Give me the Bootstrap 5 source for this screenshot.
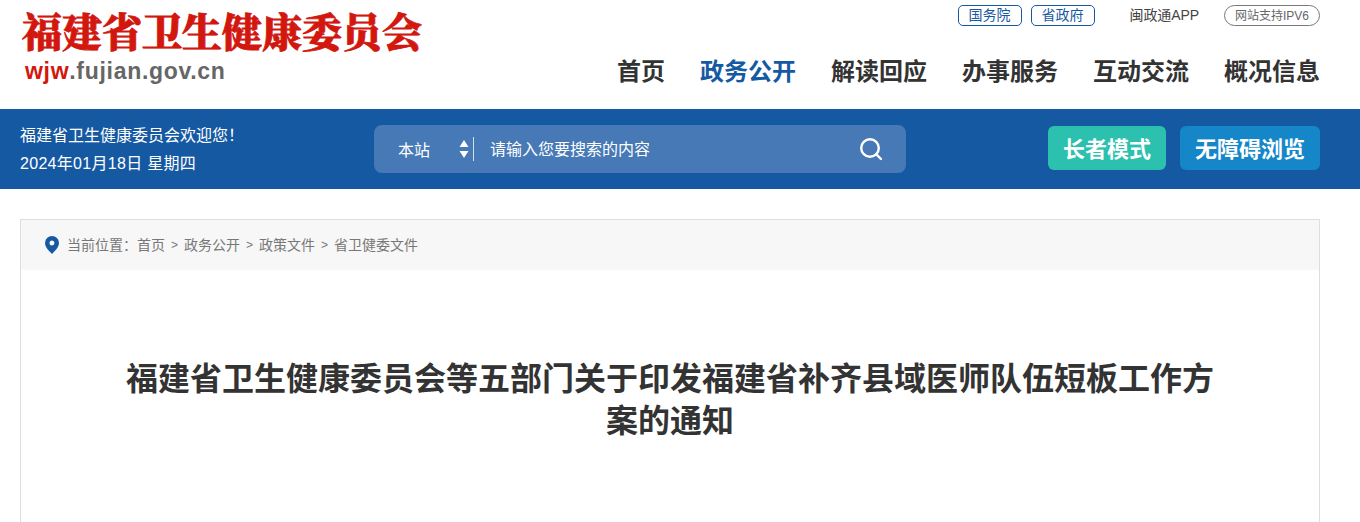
<!DOCTYPE html>
<html lang="zh"><head><meta charset="utf-8">
<link href="https://cdn.jsdelivr.net/npm/bootstrap@5.3.0/dist/css/bootstrap.min.css" rel="stylesheet">
<style>
html,body{height:522px;overflow:hidden}
body{font-family:"Liberation Sans","Noto Sans CJK SC",sans-serif;color:#333;background:#fff}
.top-wrap{height:109px;padding:0 40px 0 20px}
.logo-title{font-family:"Liberation Serif","Noto Serif CJK SC","Noto Sans CJK SC",serif;font-weight:900;font-size:40px;line-height:40px;color:#d2170f;margin:14px 0 0 2px;white-space:nowrap;-webkit-text-stroke:.8px #d2170f}
.logo-url{font-size:23px;line-height:26px;font-weight:700;color:#666;margin:4px 0 0 5px;letter-spacing:.7px}
.logo-url b{color:#d2170f}
.pill{font-size:14px;line-height:19px;height:21px;border:1px solid #1659a3;border-radius:5px;color:#1659a3;padding:0 10px;text-decoration:none}
.pill-grey{border-color:#777;color:#666;border-radius:11px;font-size:12px;padding:0 10px;line-height:20px}
.pill-gap{margin-left:9px}
.app-txt{font-size:14px;line-height:20px;color:#444;margin-left:35px;margin-top:-1px;letter-spacing:-.1px}
.ipv-gap{margin-left:25px}
.top-links{height:21px;margin-top:5px}
.main-nav{gap:35px;margin-top:30px}
.main-nav a{font-size:24px;line-height:32px;font-weight:700;color:#333;text-decoration:none}
.main-nav a.on{color:#1659a3}
.blue-band{background:#1659a3;height:80px;padding:0 40px 0 20px;color:#fff}
.welcome{width:354px;font-size:16px;line-height:28px;padding-top:1px}
.date-line{letter-spacing:.3px}
.search-box{width:532px;height:48px;background:#4679b5;border-radius:8px;color:#fff;font-size:16px}
.search-scope{width:100px;padding-left:24px;height:24px;border-right:1px solid rgba(255,255,255,.75)}
.scope-name{padding-top:3px}
.search-hint{padding-top:1px}
.search-ico{margin-right:23px}
.mode-row{gap:14px;margin-top:-2px}
.mode-btn{height:44px;font-size:22px;line-height:47px;font-weight:700;color:#fff;border-radius:6px;text-decoration:none;text-align:center}
.mode-a{background:#2cc0ae;width:118px}
.mode-b{background:#1586c8;width:140px}
.panel{margin:30px 40px 0 20px;border:1px solid #dedede;border-bottom:0;height:303px}
.crumb-bar{height:50px;background:#f7f7f7;padding-left:24px;font-size:14px;color:#777;gap:6px}
.crumb-pin{margin-right:2px}
.crumb-sep{font-size:12px}
.doc-title{font-size:32px;line-height:42px;font-weight:700;color:#333;text-align:center;margin:88px auto 0;width:1100px}
</style></head><body>
<header class="top-wrap d-flex justify-content-between">
 <div>
  <div class="logo-title">福建省卫生健康委员会</div>
  <div class="logo-url"><b>wjw</b>.fujian.gov.cn</div>
 </div>
 <div class="d-flex flex-column align-items-end">
  <div class="top-links d-flex align-items-center">
   <a class="pill" href="#">国务院</a><a class="pill pill-gap" href="#">省政府</a>
   <span class="app-txt">闽政通APP</span>
   <a class="pill pill-grey ipv-gap" href="#">网站支持IPV6</a>
  </div>
  <nav class="main-nav d-flex">
   <a href="#">首页</a><a class="on" href="#">政务公开</a><a href="#">解读回应</a><a href="#">办事服务</a><a href="#">互动交流</a><a href="#">概况信息</a>
  </nav>
 </div>
</header>
<section class="blue-band d-flex align-items-center">
 <div class="welcome"><div>福建省卫生健康委员会欢迎您！</div><div class="date-line">2024年01月18日 星期四</div></div>
 <div class="search-box d-flex align-items-center">
  <div class="search-scope d-flex align-items-center justify-content-between pe-1"><span class="scope-name">本站</span>
   <svg width="10" height="20" viewBox="0 0 10 20"><path d="M5 1 9.500 8H.5zM5 19 .5 12h9z" fill="#fff"/></svg></div>
  <div class="search-hint ps-3 flex-grow-1">请输入您要搜索的内容</div>
  <svg class="search-ico" width="24" height="24" viewBox="0 0 24 24" fill="none" stroke="#fff" stroke-width="2.4" stroke-linecap="round"><circle cx="11" cy="11" r="8.800"/><path d="m18 18 4 4"/></svg>
 </div>
 <div class="mode-row ms-auto d-flex">
  <a class="mode-btn mode-a" href="#">长者模式</a>
  <a class="mode-btn mode-b" href="#">无障碍浏览</a>
 </div>
</section>
<main class="panel">
 <div class="crumb-bar d-flex align-items-center">
  <svg class="crumb-pin" width="14" height="18" viewBox="0 0 14 18"><path fill-rule="evenodd" d="M7 0a7 7 0 0 1 7 7c0 4-4 8-7 11C4 15 0 11 0 7a7 7 0 0 1 7-7Zm0 4.500a2.500 2.500 0 1 0 0 5 2.500 2.500 0 0 0 0-5Z" fill="#1659a3"/></svg>
  <span>当前位置：首页</span><span class="crumb-sep">&gt;</span><span>政务公开</span><span class="crumb-sep">&gt;</span><span>政策文件</span><span class="crumb-sep">&gt;</span><span>省卫健委文件</span>
 </div>
 <h1 class="doc-title">福建省卫生健康委员会等五部门关于印发福建省补齐县域医师队伍短板工作方案的通知</h1>
</main>
</body></html>
